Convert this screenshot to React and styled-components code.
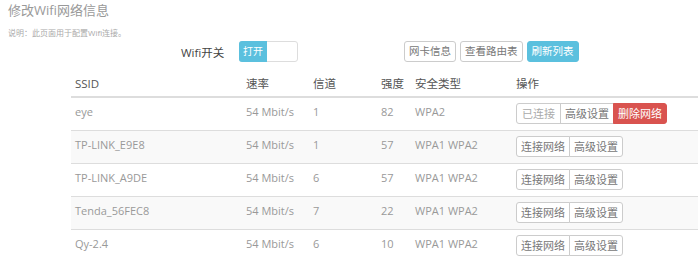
import React from 'react';
import styled, { createGlobalStyle } from 'styled-components';

const networks = [
  { ssid: 'eye', rate: '54 Mbit/s', channel: '1', strength: '82', security: 'WPA2', connected: true },
  { ssid: 'TP-LINK_E9E8', rate: '54 Mbit/s', channel: '1', strength: '57', security: 'WPA1 WPA2' },
  { ssid: 'TP-LINK_A9DE', rate: '54 Mbit/s', channel: '6', strength: '57', security: 'WPA1 WPA2' },
  { ssid: 'Tenda_56FEC8', rate: '54 Mbit/s', channel: '7', strength: '22', security: 'WPA1 WPA2' },
  { ssid: 'Qy-2.4', rate: '54 Mbit/s', channel: '6', strength: '10', security: 'WPA1 WPA2' },
];

const GlobalStyle = createGlobalStyle`
  body {
    margin: 0;
    background: #fff;
    font-family: "Open Sans", "Noto Sans CJK SC", sans-serif;
  }
`;

const App = () => {
  return (
    <Page>
      <GlobalStyle />
      <Title>修改Wifi网络信息</Title>
      <Note>说明：此页面用于配置Wifi连接。</Note>
      <Controls>
        <SwitchLabel>Wifi开关</SwitchLabel>
        <Toggle>
          <ToggleOn>打开</ToggleOn>
        </Toggle>
        <Actions>
          <Button>网卡信息</Button>
          <Button>查看路由表</Button>
          <Button variant="info">刷新列表</Button>
        </Actions>
      </Controls>
      <Table>
        <colgroup>
          <col style={{ width: 171 }} />
          <col style={{ width: 67 }} />
          <col style={{ width: 68 }} />
          <col style={{ width: 34 }} />
          <col style={{ width: 101 }} />
          <col />
        </colgroup>
        <thead>
          <tr>
            <th>SSID</th>
            <th>速率</th>
            <th>信道</th>
            <th>强度</th>
            <th>安全类型</th>
            <th>操作</th>
          </tr>
        </thead>
        <tbody>
          {networks.map((n) => (
            <tr key={n.ssid}>
              <td>{n.ssid}</td>
              <td>{n.rate}</td>
              <td>{n.channel}</td>
              <td>{n.strength}</td>
              <td>{n.security}</td>
              <td>
                <Group>
                  {n.connected ? (
                    <GroupButton disabled>已连接</GroupButton>
                  ) : (
                    <GroupButton>连接网络</GroupButton>
                  )}
                  <GroupButton>高级设置</GroupButton>
                  {n.connected && <GroupButton variant="danger">删除网络</GroupButton>}
                </Group>
              </td>
            </tr>
          ))}
        </tbody>
      </Table>
    </Page>
  );
};

const Page = styled.div`
  padding-left: 8px;
  width: 690px;
  height: 268px;
  overflow: hidden;
`;

const Title = styled.h3`
  margin: 0;
  font-size: 13px;
  font-weight: 400;
  line-height: 20px;
  color: #999;
`;

const Note = styled.p`
  margin: 6px 0 0;
  font-size: 8px;
  line-height: 14px;
  color: #aaa;
`;

const Controls = styled.div`
  display: flex;
  align-items: center;
  margin-top: 1px;
  padding-left: 173px;
  height: 21px;
`;

const SwitchLabel = styled.span`
  font-size: 11.5px;
  color: #444;
  width: 58px;
`;

const Toggle = styled.div`
  display: flex;
  width: 57px;
  height: 19px;
  border: 1px solid #ddd;
  border-radius: 3px;
  background: #fff;
`;

const ToggleOn = styled.span`
  width: 28px;
  margin: -1px 0 -1px -1px;
  border-radius: 3px 0 0 3px;
  background: #5bc0de;
  color: #fff;
  font-size: 10px;
  line-height: 21px;
  text-align: center;
`;

const Actions = styled.div`
  display: flex;
  gap: 4px;
  margin-left: 106px;
`;

const Button = styled.button`
  height: 21px;
  padding: 0 4px;
  border: 1px solid ${({ variant }) => (variant === 'info' ? '#5bc0de' : '#ccc')};
  border-radius: 3px;
  background: ${({ variant }) => (variant === 'info' ? '#5bc0de' : '#fff')};
  color: ${({ variant }) => (variant === 'info' ? '#fff' : '#777')};
  font-family: inherit;
  font-size: 10.5px;
  line-height: 19px;
`;

const Table = styled.table`
  margin: 6px 0 0 63px;
  width: 627px;
  border-collapse: collapse;
  table-layout: fixed;
  font-size: 11px;

  th {
    padding: 7px 4px 3px;
    line-height: 18px;
    text-align: left;
    font-weight: 400;
    color: #555;
    font-size: 11.5px;
    border-bottom: 2px solid #ddd;
  }
  td {
    padding: 5px 4px 6px;
    height: 21px;
    line-height: 18px;
    vertical-align: top;
    color: #999;
    border-top: 1px solid #ddd;
    white-space: nowrap;
  }
  tbody tr:nth-child(even) td {
    background: #f9f9f9;
  }
`;

const Group = styled.div`
  display: inline-flex;
`;

const GroupButton = styled.button`
  height: 21px;
  padding: 0 ${({ disabled }) => (disabled ? '5px' : '4px')};
  margin-left: -1px;
  border: 1px solid ${({ variant }) => (variant === 'danger' ? '#d9534f' : '#ccc')};
  background: ${({ variant }) => (variant === 'danger' ? '#d9534f' : '#fff')};
  color: ${({ variant, disabled }) => (variant === 'danger' ? '#fff' : disabled ? '#aaa' : '#777')};
  font-family: inherit;
  font-size: 11px;
  line-height: 19px;
  border-radius: 0;

  &:first-child {
    margin-left: 0;
    border-radius: 3px 0 0 3px;
  }
  &:last-child {
    border-radius: 0 3px 3px 0;
  }
`;

export default App;
